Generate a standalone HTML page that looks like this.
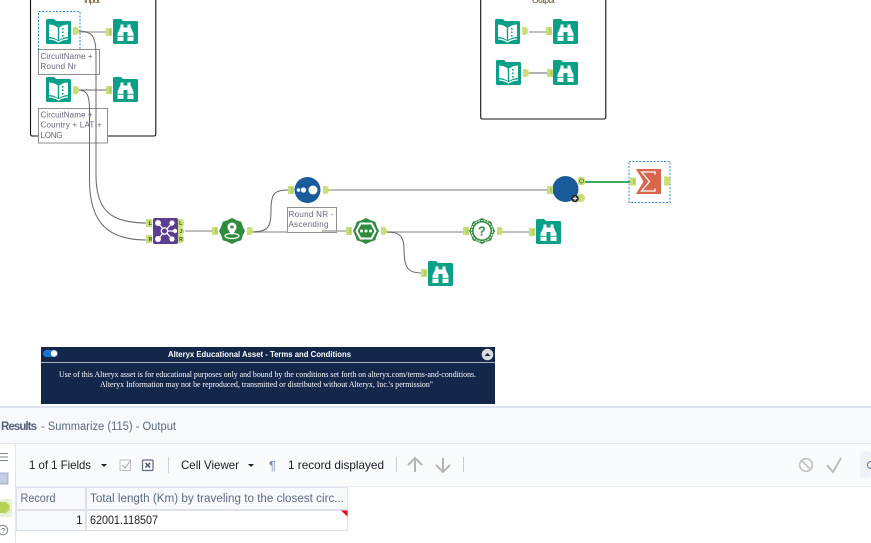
<!DOCTYPE html>
<html><head><meta charset="utf-8"><style>
html,body{margin:0;padding:0;background:#fff;width:871px;height:543px;overflow:hidden}
svg{display:block}
.c{font:8px "Liberation Sans",sans-serif;fill:#62667f}
.t{font:12px "Liberation Sans",sans-serif;fill:#1c1c28}
.h{font:11.5px "Liberation Sans",sans-serif;fill:#5d6b82}
</style></head><body>
<svg width="871" height="543" viewBox="0 0 871 543" xmlns="http://www.w3.org/2000/svg">
<defs>
<symbol id="book" viewBox="0 0 25 25" overflow="visible">
<path d="M1.500 0H8L10 2H23.500Q25 2 25 3.500V23.500Q25 25 23.500 25H1.500Q0 25 0 23.500V1.500Q0 0 1.500 0Z" fill="#0aa088"/>
<path d="M3 5.500Q8 5.500 11.800 8.500V21Q8 18 3 18ZM13.200 8.500Q17 5.500 22 5.500V18Q17 18 13.200 21Z" fill="#fff"/>
<path d="M3 20Q8 20 12.500 23Q17 20 22 20" fill="none" stroke="#fff" stroke-width="1.200"/>
<path d="M16.800 9v1.500M16.800 12.500v1.500M16.800 16v1.500" stroke="#0aa088" stroke-width="1.600"/>
</symbol>
<symbol id="browse" viewBox="0 0 25 25" overflow="visible">
<path d="M1.500 0H8L10 2H23.500Q25 2 25 3.500V23.500Q25 25 23.500 25H1.500Q0 25 0 23.500V1.500Q0 0 1.500 0Z" fill="#0aa088"/>
<path d="M7.500 5.500H10.500V8.500H14.500V5.500H17.500V8L20.500 14.500V22H14.500V13H10.500V22H4.500V14.500L7.500 8Z" fill="#fff"/>
<path d="M4.500 17.300H10.500M14.500 17.300H20.500" stroke="#0aa088" stroke-width=".9"/>
</symbol>
<symbol id="ain" viewBox="0 0 7 8" overflow="visible">
<rect width="6" height="8" fill="#c9e07a"/><path d="M4 1.500V6.500" stroke="#93ae4a" stroke-width=".8"/>
</symbol>
<symbol id="aout" viewBox="0 0 7 8" overflow="visible">
<path d="M0 0H3.500Q6 1 6 4Q6 7 3.500 8H0Z" fill="#c9e07a"/>
</symbol>
<symbol id="badge" viewBox="-13 -13 26 26" overflow="visible">
<path d="M0-13L4.500-10.800 9.200-9.200 10.800-4.500 13 0 10.800 4.500 9.200 9.200 4.500 10.800 0 13-4.500 10.800-9.200 9.200-10.800 4.500-13 0-10.800-4.500-9.200-9.200-4.500-10.800Z" fill="#2f8c3e"/>
</symbol>
</defs>

<!-- containers -->
<path d="M30.500 -2V134Q30.500 136 32.500 136H154Q155.800 136 155.800 134V-2" fill="none" stroke="#111" stroke-width="1.100"/>
<path d="M480.700 -2V117Q480.700 119 482.700 119H604Q605.800 119 605.800 117V-2" fill="none" stroke="#111" stroke-width="1.100"/>
<text x="84" y="3" font-family="Liberation Sans" font-size="8.500" fill="#6b4a12" textLength="16">Input</text>
<text x="532" y="3" font-family="Liberation Sans" font-size="8.500" fill="#6b4a12" textLength="23">Output</text>

<!-- comments -->
<g fill="#fff" stroke="#8f8f8f" stroke-width="1">
<rect x="38.500" y="49.500" width="61" height="25"/>
<rect x="38.500" y="108.500" width="69" height="34.500"/>
<rect x="287.500" y="207.500" width="49" height="25"/>
</g>
<text class="c" x="40.500" y="59" textLength="52">CircuitName +</text>
<text class="c" x="40.500" y="69" textLength="36">Round Nr</text>
<text class="c" x="40.500" y="117.500" textLength="52">CircuitName +</text>
<text class="c" x="40.500" y="127.500" textLength="61">Country + LAT +</text>
<text class="c" x="40.500" y="138" textLength="22">LONG</text>
<text class="c" x="288.500" y="217" textLength="45">Round NR -</text>
<text class="c" x="288.500" y="227" textLength="40">Ascending</text>

<!-- wires -->
<g fill="none" stroke="#a8a8a8" stroke-width="1.600">
<path d="M78 32H107"/>
<path d="M185 231H212"/>
<path d="M250 232H288"/>
<path d="M326 190H548"/>
<path d="M322 231H346"/>
<path d="M386 232H463"/>
<path d="M502 232H529"/>
<path d="M529 32H547"/>
</g>
<g fill="none" stroke="#666" stroke-width="1">
<path d="M78 31C92 31 96 36 96 55V175C96 210 110 223 147 223"/>
<path d="M78 90C87 90 89.500 95 89.500 110V180C89.500 225 110 240 147 240"/>
<path d="M78 90H107"/>
<path d="M529 73H547"/>
<path d="M250 232C268 232 271 228 271 210C271 194 274 190 288 190"/>
<path d="M386 232C400 232 404 236 404 250C404 268 408 273 422 273"/>
</g>
<path d="M585 182H630" stroke="#3fa860" stroke-width="2" fill="none"/>

<!-- selection -->
<path d="M38.500 50V11.500H80V50" fill="none" stroke="#2f86d8" stroke-width="1" stroke-dasharray="2 1.500"/>
<rect x="629" y="161.500" width="41" height="41" fill="none" stroke="#2f86d8" stroke-width="1" stroke-dasharray="2 1.500"/>

<!-- input container tools -->
<use href="#book" x="46" y="19" width="25" height="25"/>
<use href="#book" x="46" y="77" width="25" height="25"/>
<use href="#browse" x="113" y="19" width="25" height="25"/>
<use href="#browse" x="113" y="77" width="25" height="25"/>
<use href="#aout" x="73" y="27" width="7" height="8"/>
<use href="#aout" x="73" y="86" width="7" height="8"/>
<use href="#ain" x="106" y="28" width="7" height="8"/>
<use href="#ain" x="106" y="86" width="7" height="8"/>

<!-- output container tools -->
<use href="#book" x="495" y="19" width="25" height="25"/>
<use href="#book" x="496" y="60" width="25" height="25"/>
<use href="#browse" x="553" y="19" width="25" height="25"/>
<use href="#browse" x="553" y="60" width="25" height="25"/>
<use href="#aout" x="522" y="27" width="7" height="8"/>
<use href="#aout" x="523" y="69" width="7" height="8"/>
<use href="#ain" x="546" y="27" width="7" height="8"/>
<use href="#ain" x="547" y="69" width="7" height="8"/>

<!-- join -->
<rect x="153" y="218" width="25" height="26" rx="2" fill="#5c3d92"/>
<g stroke="#fff" stroke-width="1.300"><path d="M165 231L158 223M165 231L158 239M165 231L172 223M165 231L172 239M165 231H175"/></g>
<g fill="#fff"><circle cx="158" cy="223" r="3"/><circle cx="158" cy="239" r="3"/><circle cx="172" cy="223" r="2.600"/><circle cx="172" cy="239" r="2.600"/><circle cx="175" cy="231" r="2.200"/></g>
<circle cx="164.500" cy="231" r="3.200" fill="#5c3d92" stroke="#fff" stroke-width="1.300"/>
<use href="#ain" x="146" y="219" width="7" height="8"/>
<use href="#ain" x="146" y="235" width="7" height="8"/>
<use href="#aout" x="178" y="219" width="7" height="8"/>
<use href="#aout" x="178" y="227" width="7" height="8"/>
<use href="#aout" x="178" y="235" width="7" height="8"/>
<g font-family="Liberation Sans" font-size="5.500" font-weight="bold" fill="#46601a"><text x="148.500" y="225">L</text><text x="148.500" y="241">R</text><text x="179" y="225">L</text><text x="179.500" y="233">J</text><text x="179" y="241">R</text></g>

<!-- location -->
<use href="#badge" x="219" y="218" width="26" height="26"/>
<path d="M232 222.500a4.500 4.500 0 0 1 4.500 4.500c0 3-4.500 8-4.500 8s-4.500-5-4.500-8a4.500 4.500 0 0 1 4.500-4.500Z" fill="#fff"/>
<circle cx="232" cy="227" r="1.600" fill="#2f8c3e"/>
<ellipse cx="232" cy="236" rx="7" ry="2.500" fill="none" stroke="#fff" stroke-width="1.200"/>
<use href="#ain" x="212" y="227" width="7" height="8"/>
<use href="#aout" x="247" y="227" width="7" height="8"/>

<!-- sort -->
<circle cx="307.500" cy="190" r="13" fill="#1a5c9b"/>
<circle cx="298.500" cy="190" r="1.800" fill="#fff"/><circle cx="303.500" cy="190" r="2.600" fill="#fff"/><circle cx="313" cy="190" r="4.500" fill="#fff"/>
<use href="#ain" x="288" y="186" width="7" height="8"/>
<use href="#aout" x="323" y="186" width="7" height="8"/>

<!-- formula-ish -->
<use href="#badge" x="353" y="218" width="26" height="26"/>
<path d="M360.500 223.500H371.500L375.500 231L371.500 238.500H360.500L356.500 231Z" fill="#2f8c3e" stroke="#fff" stroke-width="2"/>
<circle cx="361.500" cy="231" r="1.500" fill="#fff"/><circle cx="366" cy="231" r="1.500" fill="#fff"/><circle cx="370.500" cy="231" r="1.500" fill="#fff"/>
<use href="#ain" x="346" y="227" width="7" height="8"/>
<use href="#aout" x="381" y="227" width="7" height="8"/>

<!-- test -->
<use href="#badge" x="469" y="218" width="26" height="26"/>
<circle cx="482" cy="231" r="10.500" fill="none" stroke="#fff" stroke-width="1" stroke-dasharray="2 1"/>
<circle cx="482" cy="231" r="8.500" fill="#fff"/>
<text x="478" y="235.500" font-family="Liberation Sans" font-size="12.500" font-weight="bold" fill="#2f8c3e">?</text>
<use href="#ain" x="463" y="227" width="7" height="8"/>
<use href="#aout" x="497" y="227" width="7" height="8"/>

<use href="#browse" x="536" y="219" width="25" height="25"/>
<use href="#ain" x="529" y="228" width="7" height="8"/>
<use href="#browse" x="428" y="261" width="25" height="25"/>
<use href="#ain" x="421" y="269" width="7" height="8"/>

<!-- union -->
<circle cx="565.500" cy="189" r="13" fill="#1a5c9b"/>
<use href="#ain" x="547" y="186" width="7" height="8"/>
<rect x="578" y="177" width="7" height="8" rx="2" fill="#c9e07a"/>
<circle cx="581.500" cy="181" r="2" fill="none" stroke="#55701f" stroke-width=".8"/>
<path d="M578 194H582Q585 195 585 198Q585 201 582 202H578Z" fill="#c9e07a"/>
<circle cx="575" cy="198.500" r="3.800" fill="#2a2a2a"/>
<path d="M573 198.500H577M575 196.500V200.500" stroke="#fff" stroke-width="1.200"/>

<!-- summarize -->
<path d="M636 169H661V194H636L643.500 181.500Z" fill="#d8664c"/>
<path d="M655 174.500V172H641.500L649.500 181.500L641.500 191H655V188.500" fill="none" stroke="#fff" stroke-width="1.300"/>
<use href="#ain" x="630" y="177.500" width="7" height="8"/>
<use href="#aout" x="664" y="176" width="8" height="10"/>

<!-- terms box -->
<rect x="41" y="347" width="454" height="57" fill="#12274a"/>
<rect x="41" y="362" width="454" height="1" fill="#aab2c0"/>
<rect x="43" y="350" width="15" height="7" rx="3.500" fill="#1576d8"/>
<circle cx="54" cy="353.500" r="3.200" fill="#fff"/>
<text x="168" y="357" font-family="Liberation Sans" font-size="8" font-weight="bold" fill="#fff" textLength="183" lengthAdjust="spacingAndGlyphs">Alteryx Educational Asset - Terms and Conditions</text>
<circle cx="487.500" cy="354.500" r="5.800" fill="#d8dbe0"/>
<path d="M484.500 356L487.500 353L490.500 356Z" fill="#1a2a44"/>
<text x="59" y="377" font-family="Liberation Serif" font-size="8" fill="#fff" textLength="417" lengthAdjust="spacingAndGlyphs">Use of this Alteryx asset is for educational purposes only and bound by the conditions set forth on alteryx.com/terms-and-conditions.</text>
<text x="100" y="387" font-family="Liberation Serif" font-size="8" fill="#fff" textLength="333" lengthAdjust="spacingAndGlyphs">Alteryx Information may not be reproduced, transmitted or distributed without Alteryx, Inc.'s permission"</text>

<!-- results panel -->
<rect x="0" y="406" width="871" height="137" fill="#fff"/>
<rect x="0" y="406" width="871" height="2" fill="#dfe5f0"/>
<rect x="0" y="408" width="871" height="35" fill="#f7f9fd"/>
<rect x="0" y="443" width="871" height="1" fill="#dfe5f0"/>
<rect x="16" y="444" width="855" height="42" fill="#fafbfd"/>
<rect x="16" y="486" width="855" height="1" fill="#eceef2"/>
<rect x="15" y="444" width="1" height="99" fill="#dfe5f0"/>
<text x="1" y="430" font-family="Liberation Sans" font-size="11.500" font-weight="bold" fill="#56627a" textLength="36">Results</text>
<text x="41" y="430" font-family="Liberation Sans" font-size="11.500" fill="#5d6b82" textLength="135" lengthAdjust="spacingAndGlyphs">- Summarize (115) - Output</text>

<!-- left rail -->
<path d="M0 453.500H8M0 457H8M0 460.500H8" stroke="#7f8797" stroke-width="1"/>
<rect x="-2" y="473" width="10" height="11" fill="#c3cde3" stroke="#97a2bb" stroke-width=".8"/>
<rect x="0" y="499" width="12" height="18" rx="2" fill="#e6f0d4"/>
<path d="M-2 502H6L9.500 505.500V509.500L6 513H-2Z" fill="#b5d257"/>
<circle cx="3" cy="530" r="4.800" fill="none" stroke="#7f8797" stroke-width="1"/>
<text x="1" y="533" font-family="Liberation Sans" font-size="7.500" fill="#5d6b82">?</text>

<!-- toolbar -->
<text class="t" x="29" y="469" textLength="62" lengthAdjust="spacingAndGlyphs">1 of 1 Fields</text>
<path d="M101 464H107L104 467Z" fill="#222"/>
<rect x="120" y="460" width="10.500" height="10.500" fill="none" stroke="#c0c0c0" stroke-width="1"/>
<path d="M122 465L125 468L131 460" fill="none" stroke="#b5b5b5" stroke-width="1.200"/>
<rect x="142.500" y="460" width="10.500" height="10.500" rx="1" fill="none" stroke="#5f6b82" stroke-width="1.200"/>
<path d="M145.500 463L150 467.500M150 463L145.500 467.500" stroke="#4c566c" stroke-width="1.500"/>
<rect x="168" y="457" width="1" height="16" fill="#cfd3da"/>
<text class="t" x="181" y="469" textLength="58" lengthAdjust="spacingAndGlyphs">Cell Viewer</text>
<path d="M248 464H254L251 467Z" fill="#222"/>
<text x="269" y="470" font-family="Liberation Sans" font-size="13" fill="#7b8db0">¶</text>
<text class="t" x="288" y="469" textLength="96" lengthAdjust="spacingAndGlyphs">1 record displayed</text>
<rect x="396" y="457" width="1" height="15" fill="#c8ccd2"/>
<path d="M415 472V458M408 465L415 458L422 465" fill="none" stroke="#b4b4b4" stroke-width="2"/>
<path d="M443 458V472M436 465L443 472L450 465" fill="none" stroke="#b4b4b4" stroke-width="2"/>
<rect x="463" y="457" width="1" height="15" fill="#c8ccd2"/>
<circle cx="806" cy="465" r="6.300" fill="none" stroke="#c2c2c2" stroke-width="1.700"/>
<path d="M801.500 460.500L810.500 469.500" stroke="#c2c2c2" stroke-width="1.700"/>
<path d="M827 465L833 472L841 458" fill="none" stroke="#bdbdbd" stroke-width="2"/>
<rect x="860" y="451" width="11" height="27" rx="3" fill="#f0f2f7"/>
<circle cx="871" cy="465" r="3.500" fill="none" stroke="#5f7bb0" stroke-width="1"/>

<!-- table -->
<rect x="16.500" y="487.500" width="331" height="43" fill="#fff" stroke="#dbe2ee"/>
<rect x="17" y="488" width="68" height="42" fill="#f7f9fd"/>
<rect x="87" y="488" width="260" height="21" fill="#f7f9fd"/>
<rect x="16" y="509" width="332" height="2" fill="#dbe2ee"/>
<rect x="85" y="488" width="2" height="42" fill="#dbe2ee"/>
<text class="h" x="20.500" y="502" textLength="35" lengthAdjust="spacingAndGlyphs">Record</text>
<text class="h" x="90" y="502" textLength="254" lengthAdjust="spacingAndGlyphs">Total length (Km) by traveling to the closest circ...</text>
<text class="t" x="76" y="524" font-size="11.500">1</text>
<text class="t" x="90" y="524" textLength="68" lengthAdjust="spacingAndGlyphs">62001.118507</text>
<path d="M341 510.500H347.500V516.500Z" fill="#e8001c"/>
</svg>
</body></html>
